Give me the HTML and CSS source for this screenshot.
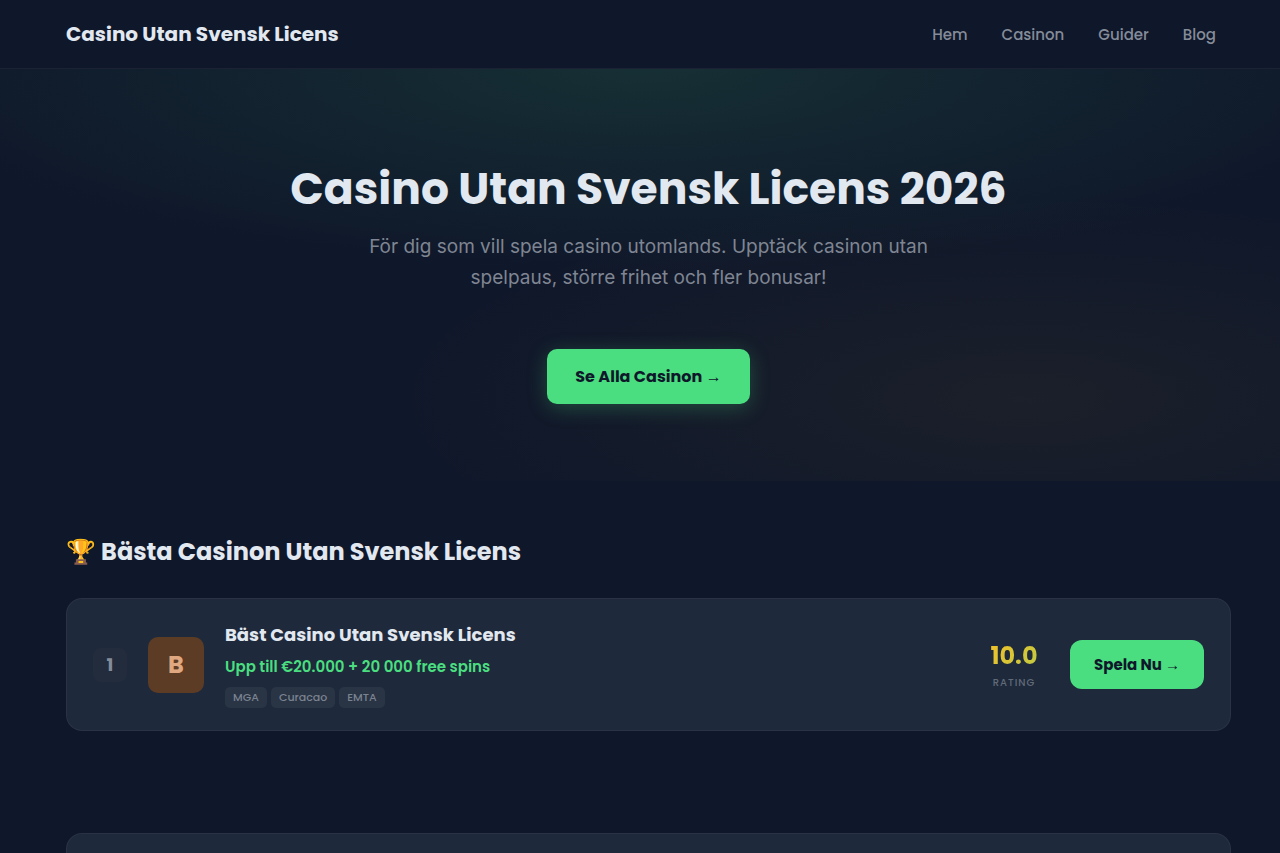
FILE: index.html
```html
<!DOCTYPE html>
<html lang="sv">

<head>
    <meta charset="UTF-8">
    <meta name="viewport" content="width=device-width, initial-scale=1.0">
    <title>Casino Utan Svensk Licens 2026</title>
    <link rel="stylesheet" href="styles.css">
</head>

<body>

    <header class="header">
        <a class="logo" href="#">Casino Utan Svensk Licens</a>
        <nav class="nav">
            <a href="#">Hem</a>
            <a href="#casinon">Casinon</a>
            <a href="#">Guider</a>
            <a href="#">Blog</a>
        </nav>
    </header>

    <section class="hero">
        <h1>Casino Utan Svensk Licens 2026</h1>
        <p>För dig som vill spela casino utomlands. Upptäck casinon utan spelpaus, större frihet och fler bonusar!</p>
        <a class="btn btn-hero" href="#casinon">Se Alla Casinon <span class="arrow">→</span></a>
    </section>

    <main class="content" id="casinon">
        <h2>🏆 Bästa Casinon Utan Svensk Licens</h2>

        <article class="casino-card">
            <div class="rank">1</div>
            <div class="casino-logo">B</div>
            <div class="casino-info">
                <h3>Bäst Casino Utan Svensk Licens</h3>
                <p class="bonus">Upp till €20.000 + 20 000 free spins</p>
                <div class="tags">
                    <span>MGA</span>
                    <span>Curacao</span>
                    <span>EMTA</span>
                </div>
            </div>
            <div class="rating">
                <div class="rating-value">10.0</div>
                <div class="rating-label">RATING</div>
            </div>
            <a class="btn btn-play" href="#">Spela Nu <span class="arrow">→</span></a>
        </article>

        <section class="panel"></section>
    </main>

</body>

</html>
```

FILE: styles.css
```css
* {
    margin: 0;
    padding: 0;
    box-sizing: border-box;
}

body {
    font-family: Poppins, Inter, sans-serif;
    background: #0f172a;
    color: #e2e8f0;
    overflow-x: hidden;
}

a {
    text-decoration: none;
}

/* header */
.header {
    display: flex;
    justify-content: space-between;
    align-items: center;
    height: 69px;
    padding: 0 49px 0 66px;
    border-bottom: 1px solid rgba(255, 255, 255, 0.05);
}

.logo {
    color: #e2e8f0;
    font-size: 20px;
    font-weight: 700;
}

.nav {
    display: flex;
    gap: 4px;
}

.nav a {
    padding: 8px 15px;
    color: #858c99;
    font-size: 15px;
    font-weight: 500;
}

/* hero */
.hero {
    padding: 90px 49px 77px 66px;
    text-align: center;
    background:
        radial-gradient(ellipse 60% 50% at 50% 0%, rgba(74, 222, 128, 0.12), transparent),
        radial-gradient(ellipse 50% 50% at 80% 80%, rgba(251, 191, 36, 0.05), transparent);
}

.hero h1 {
    font-size: 44px;
    line-height: 60px;
    font-weight: 700;
}

.hero p {
    max-width: 600px;
    margin: 12px auto 56px;
    color: #7f8592;
    font-family: Inter, sans-serif;
    font-size: 19px;
    line-height: 31px;
}

/* buttons */
.btn {
    display: inline-block;
    background: #4ade80;
    color: #0f172a;
    font-weight: 700;
    white-space: nowrap;
}

.btn-hero {
    padding: 0 28px;
    border-radius: 10px;
    font-size: 16px;
    line-height: 55px;
    box-shadow: 0 4px 20px rgba(74, 222, 128, 0.25);
}

.btn-play {
    padding: 0 24px;
    border-radius: 12px;
    font-size: 15px;
    line-height: 49px;
}

.arrow {
    font-family: "Liberation Sans", sans-serif;
    font-weight: 400;
}

/* casino list */
.content {
    padding: 51px 49px 60px 66px;
}

.content h2 {
    margin-bottom: 26px;
    font-size: 24px;
    line-height: 40px;
    font-weight: 700;
}

.casino-card,
.panel {
    background: #1e293b;
    border: 1px solid rgba(255, 255, 255, 0.05);
    border-radius: 16px;
}

.casino-card {
    display: flex;
    align-items: center;
    gap: 21px;
    padding: 22px 26px;
}

.rank {
    width: 34px;
    border-radius: 8px;
    background: #232c3d;
    color: #858c99;
    font-size: 18px;
    line-height: 34px;
    font-weight: 700;
    text-align: center;
}

.casino-logo {
    width: 56px;
    border-radius: 10px;
    background: #5c3c24;
    color: #e0a880;
    font-size: 24px;
    line-height: 56px;
    font-weight: 700;
    text-align: center;
}

.casino-info {
    flex: 1;
}

.casino-info h3 {
    font-size: 18px;
    line-height: 28px;
    font-weight: 700;
}

.bonus {
    margin: 6px 0 8px;
    color: #4ade80;
    font-size: 15px;
    line-height: 24px;
    font-weight: 600;
}

.tags {
    display: flex;
    gap: 4px;
}

.tags span {
    padding: 0 8px;
    border-radius: 5px;
    background: #293445;
    color: #7b8390;
    font-size: 11px;
    line-height: 21px;
    font-weight: 500;
}

.rating {
    width: 70px;
    text-align: center;
}

.rating-value {
    background: linear-gradient(135deg, #fbbf24, #4ade80 250%);
    background-clip: text;
    -webkit-background-clip: text;
    color: transparent;
    font-size: 24px;
    line-height: 36px;
    font-weight: 700;
}

.rating-label {
    color: #626b7a;
    font-size: 10px;
    line-height: 18px;
    font-weight: 500;
    letter-spacing: 1px;
}

.panel {
    height: 200px;
    margin-top: 102px;
}
```
